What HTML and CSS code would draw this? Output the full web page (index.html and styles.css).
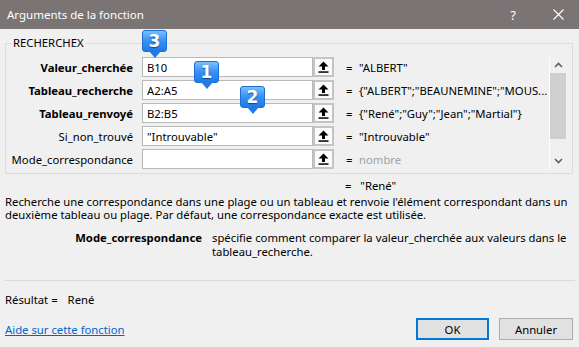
FILE: index.html
```html
<!DOCTYPE html>
<html lang="fr">
<head>
  <meta charset="UTF-8" />
  <title>Arguments de la fonction</title>
  <link rel="stylesheet" href="styles.css">
</head>
<body>
  <div class="dialog">
    <div class="titlebar">
      <span class="title">Arguments de la fonction</span>
      <span class="help">?</span>
      <span class="close">
        <svg width="11" height="11" viewBox="0 0 11 11"><path d="M0.5 0.5 L10.5 10.5 M10.5 0.5 L0.5 10.5" stroke="#fff" stroke-width="1.1" fill="none"/></svg>
      </span>
    </div>

    <div class="content">
      <fieldset class="args">
        <legend>RECHERCHEX</legend>
        <div class="args-inner">
          <div class="arg-list">
            <div class="arg-row">
              <label class="req">Valeur_cherchée</label>
              <input type="text" value="B10">
              <span class="ref-btn"><svg width="11" height="12" viewBox="0 0 11 12"><path d="M5.5 0.5 L10.5 5.5 L7 5.5 L7 9 L4 9 L4 5.5 L0.5 5.5 Z" fill="#000"/><rect x="0.5" y="10.3" width="10" height="1.5" fill="#000"/></svg></span>
              <span class="eq">=</span>
              <span class="val">"ALBERT"</span>
            </div>
            <div class="arg-row">
              <label class="req">Tableau_recherche</label>
              <input type="text" value="A2:A5">
              <span class="ref-btn"><svg width="11" height="12" viewBox="0 0 11 12"><path d="M5.5 0.5 L10.5 5.5 L7 5.5 L7 9 L4 9 L4 5.5 L0.5 5.5 Z" fill="#000"/><rect x="0.5" y="10.3" width="10" height="1.5" fill="#000"/></svg></span>
              <span class="eq">=</span>
              <span class="val">{"ALBERT";"BEAUNEMINE";"MOUS...</span>
            </div>
            <div class="arg-row">
              <label class="req">Tableau_renvoyé</label>
              <input type="text" value="B2:B5">
              <span class="ref-btn"><svg width="11" height="12" viewBox="0 0 11 12"><path d="M5.5 0.5 L10.5 5.5 L7 5.5 L7 9 L4 9 L4 5.5 L0.5 5.5 Z" fill="#000"/><rect x="0.5" y="10.3" width="10" height="1.5" fill="#000"/></svg></span>
              <span class="eq">=</span>
              <span class="val">{"René";"Guy";"Jean";"Martial"}</span>
            </div>
            <div class="arg-row">
              <label>Si_non_trouvé</label>
              <input type="text" value="&quot;Introuvable&quot;">
              <span class="ref-btn"><svg width="11" height="12" viewBox="0 0 11 12"><path d="M5.5 0.5 L10.5 5.5 L7 5.5 L7 9 L4 9 L4 5.5 L0.5 5.5 Z" fill="#000"/><rect x="0.5" y="10.3" width="10" height="1.5" fill="#000"/></svg></span>
              <span class="eq">=</span>
              <span class="val">"Introuvable"</span>
            </div>
            <div class="arg-row">
              <label>Mode_correspondance</label>
              <input type="text" value="">
              <span class="ref-btn"><svg width="11" height="12" viewBox="0 0 11 12"><path d="M5.5 0.5 L10.5 5.5 L7 5.5 L7 9 L4 9 L4 5.5 L0.5 5.5 Z" fill="#000"/><rect x="0.5" y="10.3" width="10" height="1.5" fill="#000"/></svg></span>
              <span class="eq">=</span>
              <span class="val muted">nombre</span>
            </div>
          </div>

          <div class="scrollbar">
            <span class="sb-arrow"><svg width="9" height="6" viewBox="0 0 9 6"><path d="M1 5 L4.5 1.5 L8 5" stroke="#606060" stroke-width="1.6" fill="none"/></svg></span>
            <span class="sb-thumb"></span>
            <span class="sb-track"></span>
            <span class="sb-arrow"><svg width="9" height="6" viewBox="0 0 9 6"><path d="M1 1 L4.5 4.5 L8 1" stroke="#606060" stroke-width="1.6" fill="none"/></svg></span>
          </div>
        </div>
      </fieldset>

      <div class="formula-result">=&nbsp;&nbsp;&nbsp;"René"</div>

      <p class="desc">Recherche une correspondance dans une plage ou un tableau et renvoie l'élément correspondant dans un deuxième tableau ou plage. Par défaut, une correspondance exacte est utilisée.</p>

      <div class="arg-help">
        <span class="arg-name">Mode_correspondance</span>
        <span class="arg-text">spécifie comment comparer la valeur_cherchée aux valeurs dans le tableau_recherche.</span>
      </div>

      <hr class="sep">

      <div class="result">Résultat =<span class="result-val">René</span></div>

      <div class="footer">
        <a href="#" class="help-link">Aide sur cette fonction</a>
        <div class="buttons">
          <button class="btn primary">OK</button>
          <button class="btn">Annuler</button>
        </div>
      </div>
    </div>

    <span class="badge b3">3</span>
    <span class="badge b1">1</span>
    <span class="badge b2">2</span>
  </div>
</body>
</html>
```

FILE: styles.css
```css
body {
  margin: 0;
  background: #f0f0f0;
  font-family: "Noto Sans", "Open Sans", sans-serif;
  font-size: 11.3px;
  color: #000;
}
.dialog {
  position: relative;
  width: 579px;
  height: 347px;
  overflow: hidden;
}
.titlebar {
  display: flex;
  align-items: center;
  height: 29px;
  background: #7a7574;
  color: #fff;
  padding: 0 1px 0 7px;
}
.title {
  flex: 1;
  font-size: 11.5px;
}
.help {
  width: 30px;
  margin-right: 10px;
  text-align: center;
  font-size: 13px;
}
.close {
  display: flex;
  justify-content: center;
  width: 40px;
}
.content {
  padding: 0 6px 0 5px;
}
.args {
  margin: 6px 0 0 0;
  padding: 6px 0 4px 0;
  border: 1px solid #dcdcdc;
  min-width: 0;
}
.args legend {
  margin-left: 5px;
  padding: 0 2px;
  line-height: 16px;
}
.args-inner {
  display: flex;
}
.arg-list {
  flex: 1;
}
.arg-row {
  display: flex;
  align-items: center;
  height: 20px;
  margin-bottom: 3px;
}
.arg-row:last-child {
  margin-bottom: 0;
}
.arg-row label {
  width: 127px;
  padding-right: 9px;
  text-align: right;
  white-space: nowrap;
}
.arg-row label.req {
  font-weight: bold;
}
.arg-row input {
  box-sizing: border-box;
  width: 171px;
  height: 20px;
  margin: 0;
  padding: 0 4px;
  border: 1px solid #b9b9b9;
  background: #fff;
  font: inherit;
}
.ref-btn {
  box-sizing: border-box;
  display: flex;
  align-items: center;
  justify-content: center;
  width: 21px;
  height: 20px;
  border: 2px solid #c4c4c4;
  background: #fbfbfb;
}
.eq {
  margin-left: 12px;
  width: 13px;
}
.val {
  white-space: nowrap;
}
.val.muted {
  color: #a3a3a3;
}
.scrollbar {
  display: flex;
  flex-direction: column;
  width: 16px;
  margin-right: 6px;
  border-left: 1px solid #fff;
}
.sb-arrow {
  display: flex;
  align-items: center;
  justify-content: center;
  height: 16px;
}
.sb-thumb {
  height: 66px;
  background: #cfcfcf;
}
.sb-track {
  flex: 1;
}
.formula-result {
  margin-top: 5px;
  padding-left: 340px;
  line-height: 14px;
}
.desc {
  margin: 2px 0 0 0;
  line-height: 13px;
}
.arg-help {
  display: grid;
  grid-template-columns: 197px 1fr;
  column-gap: 10px;
  margin-top: 10px;
  line-height: 14px;
}
.arg-name {
  font-weight: bold;
  text-align: right;
}
.sep {
  margin: 21px -2px 0 0;
  border: 0;
  border-top: 1px solid #dadada;
}
.result {
  margin-top: 12px;
  line-height: 14px;
}
.result-val {
  margin-left: 10px;
}
.footer {
  display: flex;
  align-items: center;
  justify-content: space-between;
  margin-top: 11px;
}
.help-link {
  color: #0066cc;
}
.buttons {
  display: flex;
  gap: 10px;
}
.btn {
  box-sizing: border-box;
  width: 74px;
  height: 22px;
  border: 1px solid #adadad;
  background: #e1e1e1;
  font: inherit;
  padding: 0;
}
.btn.primary {
  border: 2px solid #0078d7;
  width: 73px;
}
.badge {
  position: absolute;
  box-sizing: border-box;
  width: 25px;
  height: 22px;
  border: 1px solid #1d6fd3;
  border-radius: 3px;
  background: linear-gradient(#78c0ff, #3591f5 50%, #1f7be6);
  color: #fff;
  font-family: "DejaVu Sans", sans-serif;
  font-weight: bold;
  font-size: 17px;
  line-height: 20px;
  text-align: center;
  text-shadow: 0 1px 1px #0d4a99;
}
.badge::after {
  content: "";
  position: absolute;
  left: 50%;
  top: 100%;
  margin-left: -6px;
  border-left: 6px solid transparent;
  border-right: 6px solid transparent;
  border-top: 7px solid #1f7be6;
}
.b3 { left: 142px; top: 30px; }
.b1 { left: 194px; top: 61px; }
.b2 { left: 240px; top: 86px; }
```
